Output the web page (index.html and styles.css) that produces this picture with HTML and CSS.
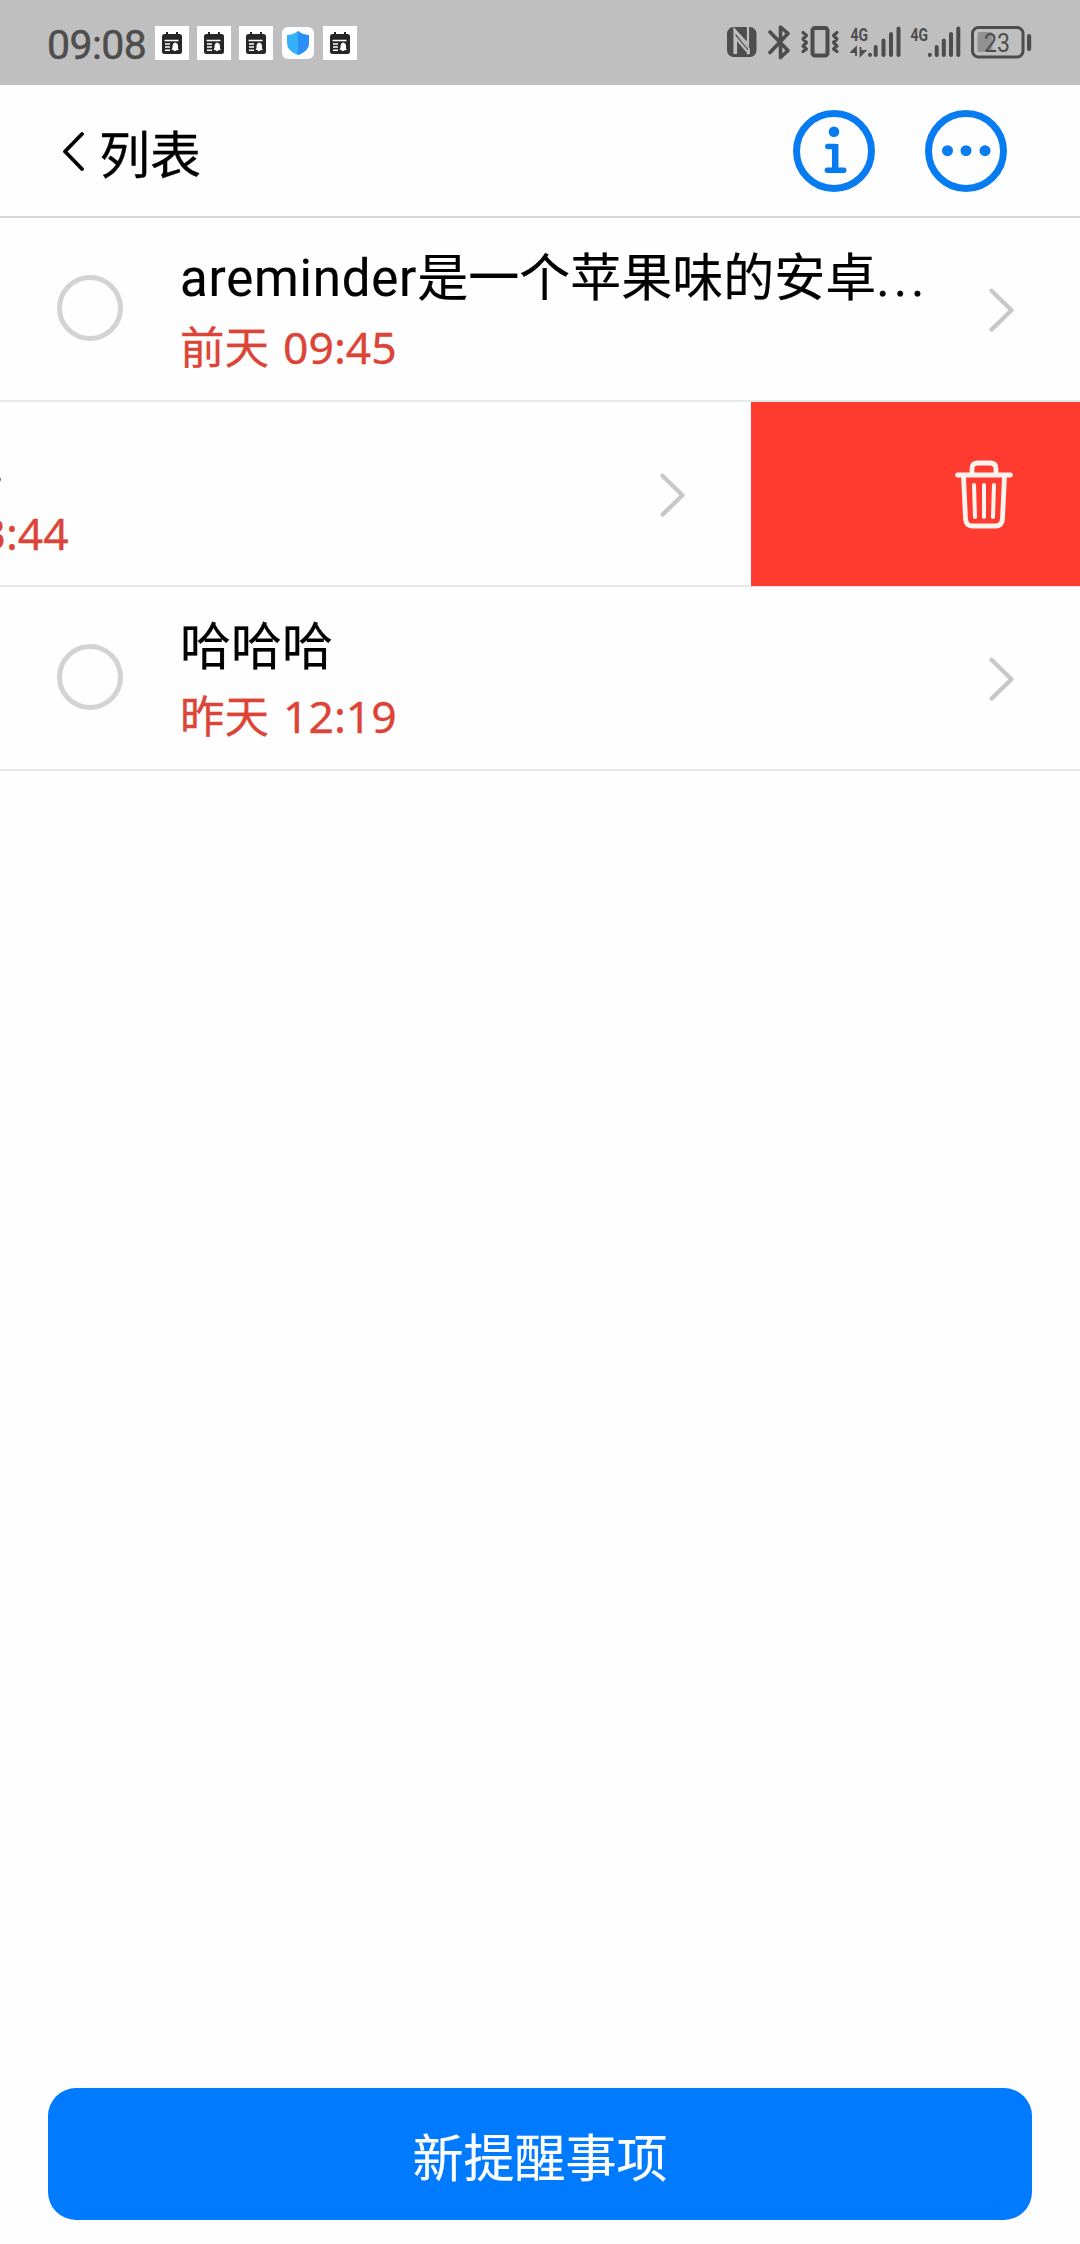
FILE: index.html
```html
<!DOCTYPE html>
<html lang="zh-CN">
<head>
<meta charset="utf-8">
<title>列表</title>
<link rel="stylesheet" href="styles.css">
</head>
<body>
<svg class="defs" width="0" height="0" aria-hidden="true">
  <symbol id="calendar" viewBox="0 0 34 34">
    <path fill="#fff" d="M0 0h34v34H0z"/>
    <path fill="#262626" d="M9.500 8H11V6h2v2h8V6h2v2h1.500q2.500 0 2.500 2.500V25.500q0 2.500-2.500 2.500h-15Q7 28 7 25.500v-15Q7 8 9.500 8z"/>
    <path stroke="#fff" stroke-width="1.500" d="M9.500 14.500h14M10 18h5M10 21h5M10 24.200h5"/>
    <path fill="#fff" d="M20 16.500q3 .5 3 3.500v2.500l1 1.200-2.500.5-1.500 1-1.500-1-2-.7 1-1.500V20q0-2.700 2.500-3.500z"/>
  </symbol>
  <symbol id="chevron" viewBox="0 0 26 44">
    <path d="M2.500 2.800 22.500 22.200 2.500 41.600" fill="none" stroke="#c8c8c8" stroke-width="4.300" stroke-linecap="round" stroke-linejoin="round"/>
  </symbol>
</svg>
<div class="screen">
  <div class="status">
    <span class="clock">09:08</span>
    <div class="notices">
      <svg class="tile"><use href="#calendar"/></svg>
      <svg class="tile"><use href="#calendar"/></svg>
      <svg class="tile"><use href="#calendar"/></svg>
      <svg class="tile" viewBox="0 0 34 34">
        <rect x="1" y="1" width="32" height="32" rx="6" fill="#fff"/>
        <path fill="#35b1fa" d="M17 5q5 4 11 4v8q0 8-11 12Q6 25 6 17V9q6 0 11-4z"/>
        <path fill="#2c8ef8" d="M17 5q5 4 11 4v8q0 8-11 12z"/>
      </svg>
      <svg class="tile"><use href="#calendar"/></svg>
    </div>
    <div class="system">
      <svg width="30" height="36" viewBox="727 24 30 36">
        <rect x="727" y="27" width="29.500" height="30" rx="6.500" fill="#4d4d4d"/>
        <path d="M734.500 54V29.500l13.500 15V27M748 54.500V52.500L736 38v16" fill="none" stroke="#bfbfbf" stroke-width="2.200"/>
        <path d="M735 31.500 749 49v5" fill="none" stroke="#bfbfbf" stroke-width="1.800"/>
      </svg>
      <svg width="24" height="36" viewBox="766 24 24 36">
        <path d="m769 32 18 18.500-7.500 7V27l7.500 6.500L769 52.500" fill="none" stroke="#4d4d4d" stroke-width="3.600" stroke-linejoin="round" stroke-linecap="round"/>
      </svg>
      <svg width="40" height="36" viewBox="799 24 40 36">
        <g fill="none" stroke="#4d4d4d" stroke-linejoin="round" stroke-linecap="round">
          <rect x="811.500" y="28" width="15" height="27.500" rx="2.500" stroke-width="4"/>
          <path stroke-width="3.200" d="m802 32.500 3.500 3-3.500 3.500 3.500 3.500-3.500 3.500 3.500 3-3.500 2.500M836 32.500l-3.500 3 3.500 3.500-3.500 3.500 3.500 3.500-3.500 3 3.500 2.500"/>
        </g>
      </svg>
      <svg width="51" height="36" viewBox="848 24 51 36">
        <text class="net" x="848.500" y="40.500" textLength="17.500" lengthAdjust="spacingAndGlyphs">4G</text>
        <path d="M868 54.800v.2M873.700 47v8M881.500 40.500V55M889 34v21M896.500 28.500V55" stroke="#4d4d4d" stroke-width="4" stroke-linecap="round"/>
        <path d="M854 56V47.500l-4.500 4.500h4.500M858.500 47v8.500l4.500-4.500h-4.500" fill="#4d4d4d" stroke="#4d4d4d" stroke-width="1.800"/>
      </svg>
      <svg width="51" height="36" viewBox="909 24 51 36">
        <text class="net" x="909.500" y="40.500" textLength="17.500" lengthAdjust="spacingAndGlyphs">4G</text>
        <path d="M928.800 54.800v.2M935.700 47v8M942.800 40.500V55M950 34v21M957.300 28.500V55" stroke="#4d4d4d" stroke-width="4" stroke-linecap="round"/>
      </svg>
      <svg width="61" height="36" viewBox="971 24 61 36">
        <rect x="977.500" y="32" width="15" height="20" rx="2" fill="#929292"/>
        <rect x="972.500" y="27.500" width="50.500" height="29.500" rx="6" fill="none" stroke="#4d4d4d" stroke-width="3"/>
        <rect x="1027" y="34" width="4.200" height="17" rx="2" fill="#4d4d4d"/>
        <text class="charge" x="984" y="51.500" textLength="26" lengthAdjust="spacingAndGlyphs">23</text>
      </svg>
    </div>
  </div>

  <header class="bar">
    <div class="back">
      <svg width="24" height="40" viewBox="0 0 24 40"><path d="M21 3 4 20.500l17 17.500" fill="none" stroke="#000" stroke-width="3.800" stroke-linecap="round" stroke-linejoin="round"/></svg>
      <span class="heading">列表</span>
    </div>
    <div class="tools">
      <svg width="82" height="82" viewBox="0 0 82 82">
        <circle cx="41" cy="41" r="37.500" fill="none" stroke="#077bf0" stroke-width="7"/>
        <circle cx="41" cy="21.700" r="5.300" fill="#077bf0"/>
        <path d="M34.800 36.500H42M34.300 60.200h16.500" fill="none" stroke="#077bf0" stroke-width="5.400" stroke-linecap="round"/>
        <path d="M42.200 34v26" stroke="#077bf0" stroke-width="6.500"/>
      </svg>
      <svg width="82" height="82" viewBox="0 0 82 82">
        <circle cx="41" cy="41" r="37.500" fill="none" stroke="#077bf0" stroke-width="7"/>
        <g fill="#077bf0"><circle cx="22.500" cy="40.700" r="5.500"/><circle cx="41" cy="40.700" r="5.500"/><circle cx="60" cy="40.700" r="5.500"/></g>
      </svg>
    </div>
  </header>

  <main class="list">
    <div class="row">
      <span class="check"></span>
      <div class="body">
        <div class="title"><span class="latin">areminder</span>是一个苹果味的安卓<span class="more">...</span></div>
        <div class="due">前天 <span class="time">09:45</span></div>
      </div>
      <svg class="chevron"><use href="#chevron"/></svg>
    </div>
    <div class="row swiped">
      <div class="slide">
        <div class="body tail">
          <div class="title">.</div>
          <div class="due"><span class="time">13:44</span></div>
        </div>
        <svg class="chevron"><use href="#chevron"/></svg>
      </div>
      <div class="delete">
        <svg width="60" height="70" viewBox="0 0 60 70">
          <g fill="none" stroke="#fff4ee" stroke-linecap="round" stroke-linejoin="round">
            <path stroke-width="4.800" d="M3.500 16h53M18 15v-5q0-6 6-6h12q6 0 6 6v5M9.500 17l2 42.500q.4 7.500 7 7.500h23q6.600 0 7-7.500l2-42.500"/>
            <path stroke-width="4" d="m20 26 1 32M30 26v32M40 26l-1 32"/>
          </g>
        </svg>
      </div>
    </div>
    <div class="row">
      <span class="check"></span>
      <div class="body">
        <div class="title">哈哈哈</div>
        <div class="due">昨天 <span class="time">12:19</span></div>
      </div>
      <svg class="chevron"><use href="#chevron"/></svg>
    </div>
  </main>

  <footer class="footer"><button class="add">新提醒事项</button></footer>
</div>
</body>
</html>
```
FILE: styles.css
```css
* { box-sizing: border-box; }

body {
  margin: 0;
  background: #fefefe;
  color: #000;
  font-family: "Noto Sans CJK SC", sans-serif;
}

svg { display: block; flex: none; }
.defs { display: none; }

.screen {
  display: flex;
  flex-direction: column;
  width: 1080px;
  height: 2244px;
  overflow: hidden;
}

/* System status bar */
.status {
  display: flex;
  align-items: center;
  height: 85px;
  padding: 0 48px 0 47px;
  background: #bfbfbf;
  color: #4d4d4d;
}
.clock {
  width: 108px;
  padding-top: 5px;
  font: 400 41px/1 Roboto, sans-serif;
  letter-spacing: -0.6px;
  -webkit-text-stroke: 0.5px #4d4d4d;
}
.notices { display: flex; gap: 8px; }
.tile { width: 34px; height: 34px; }
.system { display: flex; gap: 9.600px; margin: -1px 0 0 auto; }
.net { font: 700 18px Roboto, sans-serif; fill: #4d4d4d; }
.charge { font: 400 25px Roboto, sans-serif; fill: #4d4d4d; }

/* Navigation bar */
.bar {
  display: flex;
  align-items: center;
  justify-content: space-between;
  height: 133px;
  padding: 0 73px 0 61px;
  border-bottom: 2px solid #d8d8d8;
}
.back { display: flex; align-items: center; gap: 14px; }
.heading {
  padding-top: 2px;
  font-size: 51px;
  line-height: 60px;
  -webkit-text-stroke: 0.3px #000;
}
.tools { display: flex; gap: 50px; }

/* Reminders */
.row {
  display: flex;
  align-items: center;
  height: 184px;
  padding: 0 65px 0 57px;
  border-bottom: 2px solid #e8e8e8;
}
.check {
  flex: none;
  width: 66px;
  height: 66px;
  margin-top: -2px;
  border: 5px solid #d3d3d3;
  border-radius: 50%;
}
.body { flex: 1; min-width: 0; margin-left: 57px; white-space: nowrap; }
.title { height: 70px; font-size: 51px; line-height: 70px; -webkit-text-stroke: 0.2px #000; }
.latin { font-family: Roboto, sans-serif; line-height: 1; letter-spacing: 0.8px; }
.more { font-family: Roboto, sans-serif; line-height: 1; letter-spacing: 4px; }
.due {
  height: 70px;
  font-size: 44.500px;
  line-height: 72px;
  word-spacing: 4px;
  color: #dc4437;
  -webkit-text-stroke: 0.3px #dc4437;
}
.time { font-family: "Noto Sans", sans-serif; line-height: 1; }
.chevron { width: 26px; height: 44px; margin-top: 2px; }

.swiped { height: 185px; padding: 0; align-items: flex-start; }
.slide {
  display: flex;
  align-items: center;
  width: 751px;
  height: 184px;
  padding-right: 65px;
  overflow: hidden;
}
.tail { margin-left: -45px; padding-top: 1px; }
.tail .title { padding-left: 35px; }
.delete {
  display: flex;
  align-items: center;
  justify-content: flex-end;
  width: 329px;
  height: 184px;
  padding: 0 66px 0 0;
  background: #ff3b30;
}

.footer { margin-top: auto; padding: 0 48px 24px; }
.add {
  display: block;
  width: 984px;
  height: 132px;
  padding: 3px 0 0;
  border: 0;
  border-radius: 28px;
  background: #007aff;
  color: #fff;
  font: 400 51px/1 "Noto Sans CJK SC", sans-serif;
  -webkit-text-stroke: 0.2px #fff;
}
```
